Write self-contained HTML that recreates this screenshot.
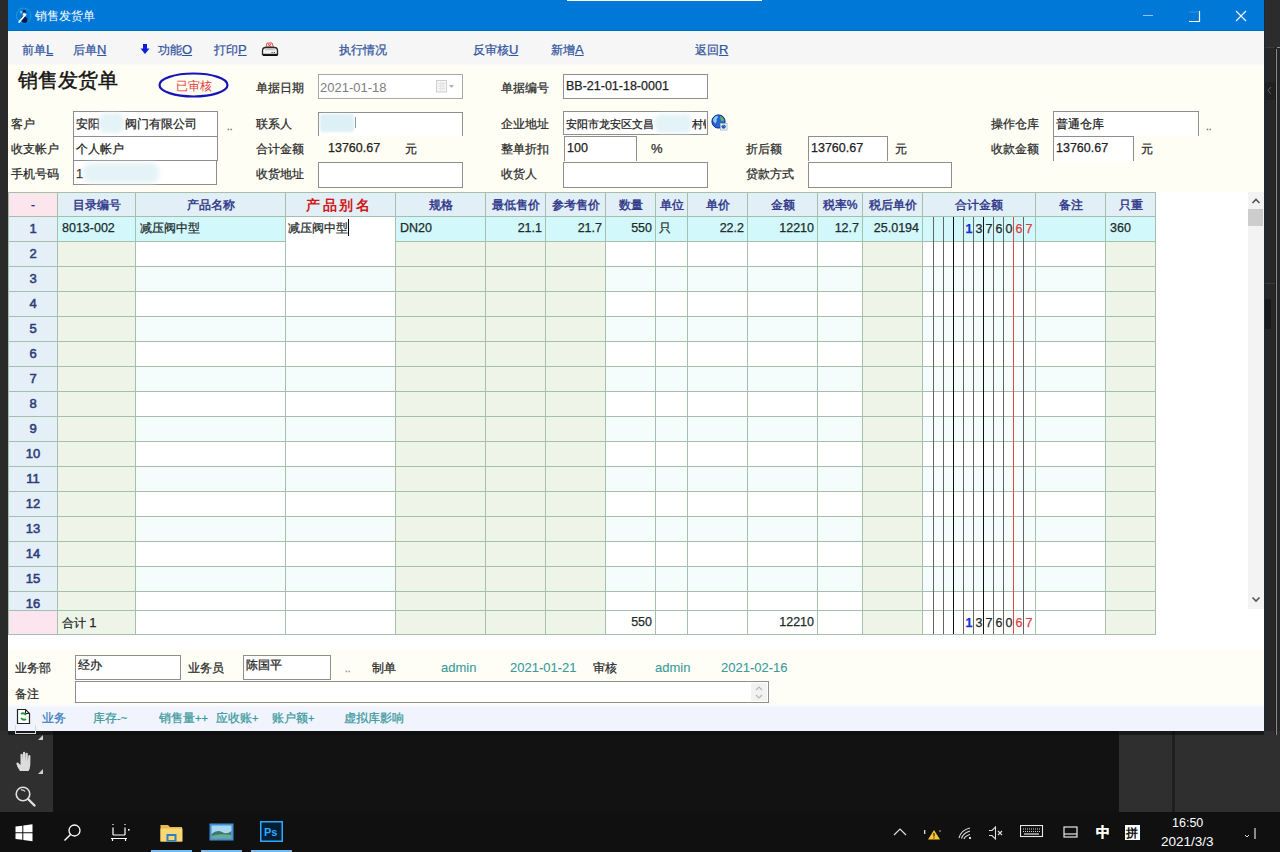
<!DOCTYPE html><html><head><meta charset="utf-8"><style>
html,body{margin:0;padding:0;width:1280px;height:852px;overflow:hidden;background:#121212;position:relative;font-family:"Liberation Sans",sans-serif;}
.t{position:absolute;white-space:nowrap;font-family:"Liberation Sans",sans-serif;-webkit-text-stroke-width:0.25px;}
.L{font-size:13px}
u{text-decoration:underline;text-underline-offset:1px}
</style></head><body>
<div style="position:absolute;left:0px;top:0px;width:8px;height:731px;background:#2a2a2a"></div>
<div style="position:absolute;left:0px;top:731px;width:53px;height:81px;background:#2f2f2f"></div>
<div style="position:absolute;left:1264px;top:0px;width:16px;height:812px;background:#272727"></div>
<div style="position:absolute;left:1119px;top:731px;width:161px;height:81px;background:#2f2f2f"></div>
<div style="position:absolute;left:1172px;top:731px;width:3px;height:81px;background:#1f1f1f"></div>
<div style="position:absolute;left:8px;top:731px;width:1256px;height:4px;background:#0c0c0c;opacity:.6"></div>
<div style="position:absolute;left:0px;top:812px;width:1280px;height:40px;background:#101010"></div>
<div style="position:absolute;left:8px;top:0px;width:1256px;height:31px;background:#0078d7"></div>
<div style="position:absolute;left:8px;top:30px;width:1256px;height:1px;background:#0868b8"></div>
<div style="position:absolute;left:8px;top:31px;width:1256px;height:1px;background:#e8fbff"></div>
<div style="position:absolute;left:567px;top:0px;width:195px;height:1px;background:#ffffff"></div>
<div style="position:absolute;left:8px;top:32px;width:1256px;height:32px;background:#f6f6f6"></div>
<div style="position:absolute;left:8px;top:64px;width:1256px;height:1px;background:#fbfbf6"></div>
<div style="position:absolute;left:8px;top:65px;width:1256px;height:127px;background:#fffef5"></div>
<div style="position:absolute;left:8px;top:192px;width:1256px;height:458px;background:#ffffff"></div>
<div style="position:absolute;left:8px;top:650px;width:1256px;height:55px;background:#fffef6"></div>
<div style="position:absolute;left:8px;top:705px;width:1256px;height:26px;background:#f1f4fc"></div>
<div style="position:absolute;left:8px;top:705px;width:1256px;height:2px;background:#f7f9fd"></div>
<div style="position:absolute;left:1264px;top:0px;width:1px;height:731px;background:#1b2a3a"></div>
<svg style="position:absolute;left:15px;top:7px" width="18" height="18" viewBox="0 0 18 18"><circle cx="8.7" cy="8.5" r="7.3" fill="none" stroke="#30a8d8" stroke-width="1.2" opacity=".55"/><path d="M6 10 Q9 8 12 11 Q13.5 14.5 10.5 16 Q7.5 16.5 6.5 14 Z" fill="#0a1a50"/><circle cx="9.3" cy="4.6" r="1.6" fill="#0a1a50"/><path d="M9 5 Q11 7 9.5 9 L7.5 8 Z" fill="#e8eef8"/><path d="M4.5 5 Q6 3 7.5 4.5 L6.5 7 Z" fill="#7fc0ea"/><path d="M4.2 15 L10.5 7.5" stroke="#ffffff" stroke-width="1.8" stroke-linecap="round"/></svg>
<div class="t" style="left:35px;top:10px;font-size:12px;line-height:12px;color:#ffffff;-webkit-text-stroke-width:0">销售发货单</div>
<div style="position:absolute;left:1143px;top:15px;width:10px;height:1px;background:#8fc3f0"></div>
<svg style="position:absolute;left:1186px;top:9px" width="16" height="14"><path d="M13.5 2 V12.5 H3" stroke="#ffffff" stroke-width="1.2" fill="none"/><path d="M3 3 H12" stroke="#3d93df" stroke-width="1" fill="none"/></svg>
<svg style="position:absolute;left:1234px;top:9px" width="14" height="14"><path d="M2 2 L12 12 M12 2 L2 12" stroke="#ffffff" stroke-width="1.1" fill="none"/></svg>
<div class="t" style="left:22px;top:44px;font-size:12px;line-height:12px;color:#34569e;">前单<u class="L">L</u></div>
<div class="t" style="left:73px;top:44px;font-size:12px;line-height:12px;color:#34569e;">后单<u class="L">N</u></div>
<svg style="position:absolute;left:139px;top:43px" width="12" height="12"><path d="M4 1 H8 V5.5 H10.5 L6 11 L1.5 5.5 H4 Z" fill="#0a1ee0"/></svg>
<div class="t" style="left:158px;top:44px;font-size:12px;line-height:12px;color:#34569e;">功能<u class="L">O</u></div>
<div class="t" style="left:214px;top:44px;font-size:12px;line-height:12px;color:#34569e;">打印<u class="L">P</u></div>
<svg style="position:absolute;left:261px;top:42px" width="18" height="15" viewBox="0 0 18 15"><path d="M6 1 L11 1 L12.5 5 L5 5 Z" fill="#ffe8e8" stroke="#d04040" stroke-width=".9"/><path d="M7 2 L10 4.5 M10 2 L7 4.5" stroke="#e03030" stroke-width=".8"/><path d="M1.5 9 Q1.5 5.5 4.5 5.5 L13.5 5.5 Q16.5 5.5 16.5 9 L16.5 12.5 L1.5 12.5 Z" fill="#f4f4f4" stroke="#2a2a2a" stroke-width="1.3"/><path d="M2 13.2 H16.5" stroke="#101010" stroke-width="1.6"/><path d="M4 8 Q9 7 14 8" stroke="#bdbdbd" stroke-width="1" fill="none"/><path d="M10.5 10.5 h1.2 M12.8 10.5 h1.2" stroke="#404040" stroke-width="1.1"/></svg>
<div class="t" style="left:339px;top:44px;font-size:12px;line-height:12px;color:#34569e;">执行情况</div>
<div class="t" style="left:473px;top:44px;font-size:12px;line-height:12px;color:#34569e;">反审核<u class="L">U</u></div>
<div class="t" style="left:551px;top:44px;font-size:12px;line-height:12px;color:#34569e;">新增<u class="L">A</u></div>
<div class="t" style="left:695px;top:44px;font-size:12px;line-height:12px;color:#34569e;">返回<u class="L">R</u></div>
<div class="t" style="left:18px;top:70px;font-size:20px;line-height:20px;color:#141414;font-weight:500;-webkit-text-stroke-width:0.45px;font-family:"Liberation Serif",serif;letter-spacing:1.2px;transform:scaleY(0.85);transform-origin:0 0">销售发货单</div>
<svg style="position:absolute;left:158px;top:72px" width="72" height="27"><ellipse cx="35.5" cy="13" rx="34" ry="11.5" fill="none" stroke="#1515b8" stroke-width="2.2"/></svg>
<div class="t" style="left:176px;top:80px;font-size:12px;line-height:12px;color:#e03a3a;-webkit-text-stroke-width:0">已审核</div>
<div class="t" style="left:256px;top:82px;font-size:12px;line-height:12px;color:#2a2a2a;">单据日期</div>
<div style="position:absolute;left:318px;top:74px;width:143px;height:23px;background:#ffffff;border:1px solid #a8a8a8;border-bottom:none;border-bottom:1px solid #a8a8a8;"></div>
<div class="t" style="left:320px;top:81px;font-size:13px;line-height:13px;color:#7e7e7e;-webkit-text-stroke-width:0">2021-01-18</div>
<svg style="position:absolute;left:435px;top:79px" width="22" height="14"><rect x="1.5" y="1.5" width="10" height="11.5" fill="#f6f6f6" stroke="#cfcfcf"/><path d="M3 4.5h7M3 7h7M3 9.5h7M5.5 3v9M8 3v9" stroke="#e0e0e0" stroke-width=".8"/><path d="M14 6 L19 6 L16.5 9 Z" fill="#b0b0b0"/></svg>
<div class="t" style="left:501px;top:82px;font-size:12px;line-height:12px;color:#2a2a2a;">单据编号</div>
<div style="position:absolute;left:563px;top:74px;width:143px;height:23px;background:#ffffff;border:1px solid #8e8e8e;border-bottom:none;border-bottom:1px solid #8e8e8e;"></div>
<div class="t" style="left:566px;top:80px;font-size:12.5px;line-height:12.5px;color:#222222;">BB-21-01-18-0001</div>
<div class="t" style="left:11px;top:118px;font-size:12px;line-height:12px;color:#2a2a2a;">客户</div>
<div style="position:absolute;left:73px;top:111px;width:143px;height:24px;background:#ffffff;border:1px solid #8e8e8e;border-bottom:none;"></div>
<div class="t" style="left:76px;top:118px;font-size:12px;line-height:12px;color:#222;">安阳</div>
<div style="position:absolute;left:99px;top:113px;width:25px;height:20px;background:#e4f3f7;border-radius:6px;filter:blur(2px)"></div>
<div class="t" style="left:125px;top:118px;font-size:12px;line-height:12px;color:#222;">阀门有限公司</div>
<div class="t" style="left:227px;top:122px;font-size:10px;line-height:10px;color:#666;">..</div>
<div class="t" style="left:256px;top:118px;font-size:12px;line-height:12px;color:#2a2a2a;">联系人</div>
<div style="position:absolute;left:318px;top:112px;width:143px;height:23px;background:#ffffff;border:1px solid #8e8e8e;border-bottom:none;"></div>
<div style="position:absolute;left:320px;top:114px;width:34px;height:18px;background:#ddf0f6;border-radius:3px;filter:blur(1.2px)"></div>
<div style="position:absolute;left:355px;top:117px;width:1px;height:11px;background:#8a9aa0"></div>
<div class="t" style="left:501px;top:118px;font-size:12px;line-height:12px;color:#2a2a2a;">企业地址</div>
<div style="position:absolute;left:563px;top:111px;width:143px;height:22px;background:#ffffff;border:1px solid #8e8e8e;border-bottom:none;border-bottom:1px solid #8e8e8e;"></div>
<div class="t" style="left:566px;top:119px;font-size:11px;line-height:11px;color:#222;">安阳市龙安区文昌</div>
<div style="position:absolute;left:655px;top:114px;width:37px;height:19px;background:#e4f3f7;border-radius:6px;filter:blur(2px)"></div>
<div class="t" style="left:692px;top:119px;font-size:11px;line-height:11px;color:#222;width:14px;overflow:hidden">村镇</div>
<svg style="position:absolute;left:711px;top:114px" width="17" height="17" viewBox="0 0 17 17"><circle cx="7.5" cy="7.5" r="6.6" fill="#2a62d0" stroke="#0c2c8a" stroke-width="1"/><path d="M2 6 Q3 2.5 6.5 1.8 Q7.5 3.5 5.5 5 Q6.5 7.5 4.5 9.5 Q2.5 8.5 2 6 Z" fill="#8fd0f0"/><path d="M9 2 Q12.5 3 13.5 6.5 L10.5 7.5 Q9 5 9 2 Z" fill="#5ab85a"/><rect x="9.5" y="9.5" width="6.5" height="6.5" fill="#ffffff" stroke="#a0b0c0" stroke-width=".8"/><circle cx="12.6" cy="12.6" r="2.2" fill="#1a58c0"/><path d="M11.3 12 Q12.6 11 13.8 12.5" stroke="#6ac060" stroke-width=".9" fill="none"/></svg>
<div class="t" style="left:991px;top:118px;font-size:12px;line-height:12px;color:#2a2a2a;">操作仓库</div>
<div style="position:absolute;left:1053px;top:111px;width:144px;height:24px;background:#ffffff;border:1px solid #8e8e8e;border-bottom:none;"></div>
<div class="t" style="left:1056px;top:118px;font-size:12px;line-height:12px;color:#222;">普通仓库</div>
<div class="t" style="left:1206px;top:122px;font-size:10px;line-height:10px;color:#666;">..</div>
<div class="t" style="left:11px;top:143px;font-size:12px;line-height:12px;color:#2a2a2a;">收支帐户</div>
<div style="position:absolute;left:73px;top:136px;width:143px;height:24px;background:#ffffff;border:1px solid #8e8e8e;border-bottom:none;"></div>
<div class="t" style="left:76px;top:143px;font-size:12px;line-height:12px;color:#222;">个人帐户</div>
<div class="t" style="left:256px;top:143px;font-size:12px;line-height:12px;color:#2a2a2a;">合计金额</div>
<div class="t" style="left:328px;top:142px;font-size:12.5px;line-height:12.5px;color:#222;">13760.67</div>
<div class="t" style="left:405px;top:143px;font-size:12px;line-height:12px;color:#2a2a2a;">元</div>
<div class="t" style="left:501px;top:143px;font-size:12px;line-height:12px;color:#2a2a2a;">整单折扣</div>
<div style="position:absolute;left:564px;top:136px;width:71px;height:24px;background:#ffffff;border:1px solid #8e8e8e;border-bottom:none;"></div>
<div class="t" style="left:567px;top:142px;font-size:12.5px;line-height:12.5px;color:#222;">100</div>
<div class="t" style="left:651px;top:142px;font-size:13px;line-height:13px;color:#2a2a2a;">%</div>
<div class="t" style="left:746px;top:143px;font-size:12px;line-height:12px;color:#2a2a2a;">折后额</div>
<div style="position:absolute;left:808px;top:136px;width:78px;height:24px;background:#ffffff;border:1px solid #8e8e8e;border-bottom:none;"></div>
<div class="t" style="left:811px;top:142px;font-size:12.5px;line-height:12.5px;color:#222;">13760.67</div>
<div class="t" style="left:895px;top:143px;font-size:12px;line-height:12px;color:#2a2a2a;">元</div>
<div class="t" style="left:991px;top:143px;font-size:12px;line-height:12px;color:#2a2a2a;">收款金额</div>
<div style="position:absolute;left:1053px;top:136px;width:79px;height:24px;background:#ffffff;border:1px solid #8e8e8e;border-bottom:none;"></div>
<div class="t" style="left:1056px;top:142px;font-size:12.5px;line-height:12.5px;color:#222;">13760.67</div>
<div class="t" style="left:1141px;top:143px;font-size:12px;line-height:12px;color:#2a2a2a;">元</div>
<div class="t" style="left:11px;top:168px;font-size:12px;line-height:12px;color:#2a2a2a;">手机号码</div>
<div style="position:absolute;left:73px;top:160px;width:142px;height:23px;background:#ffffff;border:1px solid #8e8e8e;border-bottom:none;border-bottom:1px solid #8e8e8e;"></div>
<div class="t" style="left:76px;top:167px;font-size:13px;line-height:13px;color:#333;">1</div>
<div style="position:absolute;left:83px;top:163px;width:76px;height:20px;background:#e4f3f7;border-radius:8px;filter:blur(2.5px)"></div>
<div class="t" style="left:256px;top:168px;font-size:12px;line-height:12px;color:#2a2a2a;">收货地址</div>
<div style="position:absolute;left:318px;top:162px;width:143px;height:24px;background:#ffffff;border:1px solid #8e8e8e;border-bottom:none;border-bottom:1px solid #8e8e8e;"></div>
<div class="t" style="left:501px;top:168px;font-size:12px;line-height:12px;color:#2a2a2a;">收货人</div>
<div style="position:absolute;left:563px;top:162px;width:143px;height:24px;background:#ffffff;border:1px solid #8e8e8e;border-bottom:none;border-bottom:1px solid #8e8e8e;"></div>
<div class="t" style="left:746px;top:168px;font-size:12px;line-height:12px;color:#2a2a2a;">贷款方式</div>
<div style="position:absolute;left:808px;top:162px;width:142px;height:24px;background:#ffffff;border:1px solid #8e8e8e;border-bottom:none;border-bottom:1px solid #8e8e8e;"></div>
<div style="position:absolute;left:8px;top:192px;width:49px;height:24px;background:#fde5ee"></div>
<div style="position:absolute;left:57px;top:192px;width:78px;height:24px;background:#e3eff6"></div>
<div style="position:absolute;left:135px;top:192px;width:150px;height:24px;background:#e3eff6"></div>
<div style="position:absolute;left:285px;top:192px;width:110px;height:24px;background:#e3eff6"></div>
<div style="position:absolute;left:395px;top:192px;width:90px;height:24px;background:#e3eff6"></div>
<div style="position:absolute;left:485px;top:192px;width:60px;height:24px;background:#e3eff6"></div>
<div style="position:absolute;left:545px;top:192px;width:60px;height:24px;background:#e3eff6"></div>
<div style="position:absolute;left:605px;top:192px;width:50px;height:24px;background:#e3eff6"></div>
<div style="position:absolute;left:655px;top:192px;width:32px;height:24px;background:#e3eff6"></div>
<div style="position:absolute;left:687px;top:192px;width:60px;height:24px;background:#e3eff6"></div>
<div style="position:absolute;left:747px;top:192px;width:70px;height:24px;background:#e3eff6"></div>
<div style="position:absolute;left:817px;top:192px;width:45px;height:24px;background:#e3eff6"></div>
<div style="position:absolute;left:862px;top:192px;width:60px;height:24px;background:#e3eff6"></div>
<div style="position:absolute;left:922px;top:192px;width:113px;height:24px;background:#e3eff6"></div>
<div style="position:absolute;left:1035px;top:192px;width:70px;height:24px;background:#e3eff6"></div>
<div style="position:absolute;left:1105px;top:192px;width:50px;height:24px;background:#e3eff6"></div>
<div style="position:absolute;left:8px;top:216px;width:49px;height:394px;background:#e4eff8"></div>
<div style="position:absolute;left:8px;top:610px;width:49px;height:24px;background:#fce5ee"></div>
<div style="position:absolute;left:57px;top:216px;width:78px;height:418px;background:#eef4e8"></div>
<div style="position:absolute;left:135px;top:216px;width:150px;height:25px;background:#f5fcfc"></div>
<div style="position:absolute;left:135px;top:241px;width:150px;height:25px;background:#ffffff"></div>
<div style="position:absolute;left:135px;top:266px;width:150px;height:25px;background:#f5fcfc"></div>
<div style="position:absolute;left:135px;top:291px;width:150px;height:25px;background:#ffffff"></div>
<div style="position:absolute;left:135px;top:316px;width:150px;height:25px;background:#f5fcfc"></div>
<div style="position:absolute;left:135px;top:341px;width:150px;height:25px;background:#ffffff"></div>
<div style="position:absolute;left:135px;top:366px;width:150px;height:25px;background:#f5fcfc"></div>
<div style="position:absolute;left:135px;top:391px;width:150px;height:25px;background:#ffffff"></div>
<div style="position:absolute;left:135px;top:416px;width:150px;height:25px;background:#f5fcfc"></div>
<div style="position:absolute;left:135px;top:441px;width:150px;height:25px;background:#ffffff"></div>
<div style="position:absolute;left:135px;top:466px;width:150px;height:25px;background:#f5fcfc"></div>
<div style="position:absolute;left:135px;top:491px;width:150px;height:25px;background:#ffffff"></div>
<div style="position:absolute;left:135px;top:516px;width:150px;height:25px;background:#f5fcfc"></div>
<div style="position:absolute;left:135px;top:541px;width:150px;height:25px;background:#ffffff"></div>
<div style="position:absolute;left:135px;top:566px;width:150px;height:25px;background:#f5fcfc"></div>
<div style="position:absolute;left:135px;top:591px;width:150px;height:19px;background:#ffffff"></div>
<div style="position:absolute;left:135px;top:610px;width:150px;height:24px;background:#ffffff"></div>
<div style="position:absolute;left:285px;top:216px;width:110px;height:25px;background:#f5fcfc"></div>
<div style="position:absolute;left:285px;top:241px;width:110px;height:25px;background:#ffffff"></div>
<div style="position:absolute;left:285px;top:266px;width:110px;height:25px;background:#f5fcfc"></div>
<div style="position:absolute;left:285px;top:291px;width:110px;height:25px;background:#ffffff"></div>
<div style="position:absolute;left:285px;top:316px;width:110px;height:25px;background:#f5fcfc"></div>
<div style="position:absolute;left:285px;top:341px;width:110px;height:25px;background:#ffffff"></div>
<div style="position:absolute;left:285px;top:366px;width:110px;height:25px;background:#f5fcfc"></div>
<div style="position:absolute;left:285px;top:391px;width:110px;height:25px;background:#ffffff"></div>
<div style="position:absolute;left:285px;top:416px;width:110px;height:25px;background:#f5fcfc"></div>
<div style="position:absolute;left:285px;top:441px;width:110px;height:25px;background:#ffffff"></div>
<div style="position:absolute;left:285px;top:466px;width:110px;height:25px;background:#f5fcfc"></div>
<div style="position:absolute;left:285px;top:491px;width:110px;height:25px;background:#ffffff"></div>
<div style="position:absolute;left:285px;top:516px;width:110px;height:25px;background:#f5fcfc"></div>
<div style="position:absolute;left:285px;top:541px;width:110px;height:25px;background:#ffffff"></div>
<div style="position:absolute;left:285px;top:566px;width:110px;height:25px;background:#f5fcfc"></div>
<div style="position:absolute;left:285px;top:591px;width:110px;height:19px;background:#ffffff"></div>
<div style="position:absolute;left:285px;top:610px;width:110px;height:24px;background:#ffffff"></div>
<div style="position:absolute;left:395px;top:216px;width:90px;height:418px;background:#eef4e8"></div>
<div style="position:absolute;left:485px;top:216px;width:60px;height:418px;background:#eef4e8"></div>
<div style="position:absolute;left:545px;top:216px;width:60px;height:418px;background:#eef4e8"></div>
<div style="position:absolute;left:605px;top:216px;width:50px;height:25px;background:#f5fcfc"></div>
<div style="position:absolute;left:605px;top:241px;width:50px;height:25px;background:#ffffff"></div>
<div style="position:absolute;left:605px;top:266px;width:50px;height:25px;background:#f5fcfc"></div>
<div style="position:absolute;left:605px;top:291px;width:50px;height:25px;background:#ffffff"></div>
<div style="position:absolute;left:605px;top:316px;width:50px;height:25px;background:#f5fcfc"></div>
<div style="position:absolute;left:605px;top:341px;width:50px;height:25px;background:#ffffff"></div>
<div style="position:absolute;left:605px;top:366px;width:50px;height:25px;background:#f5fcfc"></div>
<div style="position:absolute;left:605px;top:391px;width:50px;height:25px;background:#ffffff"></div>
<div style="position:absolute;left:605px;top:416px;width:50px;height:25px;background:#f5fcfc"></div>
<div style="position:absolute;left:605px;top:441px;width:50px;height:25px;background:#ffffff"></div>
<div style="position:absolute;left:605px;top:466px;width:50px;height:25px;background:#f5fcfc"></div>
<div style="position:absolute;left:605px;top:491px;width:50px;height:25px;background:#ffffff"></div>
<div style="position:absolute;left:605px;top:516px;width:50px;height:25px;background:#f5fcfc"></div>
<div style="position:absolute;left:605px;top:541px;width:50px;height:25px;background:#ffffff"></div>
<div style="position:absolute;left:605px;top:566px;width:50px;height:25px;background:#f5fcfc"></div>
<div style="position:absolute;left:605px;top:591px;width:50px;height:19px;background:#ffffff"></div>
<div style="position:absolute;left:605px;top:610px;width:50px;height:24px;background:#ffffff"></div>
<div style="position:absolute;left:655px;top:216px;width:32px;height:25px;background:#f5fcfc"></div>
<div style="position:absolute;left:655px;top:241px;width:32px;height:25px;background:#ffffff"></div>
<div style="position:absolute;left:655px;top:266px;width:32px;height:25px;background:#f5fcfc"></div>
<div style="position:absolute;left:655px;top:291px;width:32px;height:25px;background:#ffffff"></div>
<div style="position:absolute;left:655px;top:316px;width:32px;height:25px;background:#f5fcfc"></div>
<div style="position:absolute;left:655px;top:341px;width:32px;height:25px;background:#ffffff"></div>
<div style="position:absolute;left:655px;top:366px;width:32px;height:25px;background:#f5fcfc"></div>
<div style="position:absolute;left:655px;top:391px;width:32px;height:25px;background:#ffffff"></div>
<div style="position:absolute;left:655px;top:416px;width:32px;height:25px;background:#f5fcfc"></div>
<div style="position:absolute;left:655px;top:441px;width:32px;height:25px;background:#ffffff"></div>
<div style="position:absolute;left:655px;top:466px;width:32px;height:25px;background:#f5fcfc"></div>
<div style="position:absolute;left:655px;top:491px;width:32px;height:25px;background:#ffffff"></div>
<div style="position:absolute;left:655px;top:516px;width:32px;height:25px;background:#f5fcfc"></div>
<div style="position:absolute;left:655px;top:541px;width:32px;height:25px;background:#ffffff"></div>
<div style="position:absolute;left:655px;top:566px;width:32px;height:25px;background:#f5fcfc"></div>
<div style="position:absolute;left:655px;top:591px;width:32px;height:19px;background:#ffffff"></div>
<div style="position:absolute;left:655px;top:610px;width:32px;height:24px;background:#ffffff"></div>
<div style="position:absolute;left:687px;top:216px;width:60px;height:25px;background:#f5fcfc"></div>
<div style="position:absolute;left:687px;top:241px;width:60px;height:25px;background:#ffffff"></div>
<div style="position:absolute;left:687px;top:266px;width:60px;height:25px;background:#f5fcfc"></div>
<div style="position:absolute;left:687px;top:291px;width:60px;height:25px;background:#ffffff"></div>
<div style="position:absolute;left:687px;top:316px;width:60px;height:25px;background:#f5fcfc"></div>
<div style="position:absolute;left:687px;top:341px;width:60px;height:25px;background:#ffffff"></div>
<div style="position:absolute;left:687px;top:366px;width:60px;height:25px;background:#f5fcfc"></div>
<div style="position:absolute;left:687px;top:391px;width:60px;height:25px;background:#ffffff"></div>
<div style="position:absolute;left:687px;top:416px;width:60px;height:25px;background:#f5fcfc"></div>
<div style="position:absolute;left:687px;top:441px;width:60px;height:25px;background:#ffffff"></div>
<div style="position:absolute;left:687px;top:466px;width:60px;height:25px;background:#f5fcfc"></div>
<div style="position:absolute;left:687px;top:491px;width:60px;height:25px;background:#ffffff"></div>
<div style="position:absolute;left:687px;top:516px;width:60px;height:25px;background:#f5fcfc"></div>
<div style="position:absolute;left:687px;top:541px;width:60px;height:25px;background:#ffffff"></div>
<div style="position:absolute;left:687px;top:566px;width:60px;height:25px;background:#f5fcfc"></div>
<div style="position:absolute;left:687px;top:591px;width:60px;height:19px;background:#ffffff"></div>
<div style="position:absolute;left:687px;top:610px;width:60px;height:24px;background:#ffffff"></div>
<div style="position:absolute;left:747px;top:216px;width:70px;height:25px;background:#f5fcfc"></div>
<div style="position:absolute;left:747px;top:241px;width:70px;height:25px;background:#ffffff"></div>
<div style="position:absolute;left:747px;top:266px;width:70px;height:25px;background:#f5fcfc"></div>
<div style="position:absolute;left:747px;top:291px;width:70px;height:25px;background:#ffffff"></div>
<div style="position:absolute;left:747px;top:316px;width:70px;height:25px;background:#f5fcfc"></div>
<div style="position:absolute;left:747px;top:341px;width:70px;height:25px;background:#ffffff"></div>
<div style="position:absolute;left:747px;top:366px;width:70px;height:25px;background:#f5fcfc"></div>
<div style="position:absolute;left:747px;top:391px;width:70px;height:25px;background:#ffffff"></div>
<div style="position:absolute;left:747px;top:416px;width:70px;height:25px;background:#f5fcfc"></div>
<div style="position:absolute;left:747px;top:441px;width:70px;height:25px;background:#ffffff"></div>
<div style="position:absolute;left:747px;top:466px;width:70px;height:25px;background:#f5fcfc"></div>
<div style="position:absolute;left:747px;top:491px;width:70px;height:25px;background:#ffffff"></div>
<div style="position:absolute;left:747px;top:516px;width:70px;height:25px;background:#f5fcfc"></div>
<div style="position:absolute;left:747px;top:541px;width:70px;height:25px;background:#ffffff"></div>
<div style="position:absolute;left:747px;top:566px;width:70px;height:25px;background:#f5fcfc"></div>
<div style="position:absolute;left:747px;top:591px;width:70px;height:19px;background:#ffffff"></div>
<div style="position:absolute;left:747px;top:610px;width:70px;height:24px;background:#ffffff"></div>
<div style="position:absolute;left:817px;top:216px;width:45px;height:25px;background:#f5fcfc"></div>
<div style="position:absolute;left:817px;top:241px;width:45px;height:25px;background:#ffffff"></div>
<div style="position:absolute;left:817px;top:266px;width:45px;height:25px;background:#f5fcfc"></div>
<div style="position:absolute;left:817px;top:291px;width:45px;height:25px;background:#ffffff"></div>
<div style="position:absolute;left:817px;top:316px;width:45px;height:25px;background:#f5fcfc"></div>
<div style="position:absolute;left:817px;top:341px;width:45px;height:25px;background:#ffffff"></div>
<div style="position:absolute;left:817px;top:366px;width:45px;height:25px;background:#f5fcfc"></div>
<div style="position:absolute;left:817px;top:391px;width:45px;height:25px;background:#ffffff"></div>
<div style="position:absolute;left:817px;top:416px;width:45px;height:25px;background:#f5fcfc"></div>
<div style="position:absolute;left:817px;top:441px;width:45px;height:25px;background:#ffffff"></div>
<div style="position:absolute;left:817px;top:466px;width:45px;height:25px;background:#f5fcfc"></div>
<div style="position:absolute;left:817px;top:491px;width:45px;height:25px;background:#ffffff"></div>
<div style="position:absolute;left:817px;top:516px;width:45px;height:25px;background:#f5fcfc"></div>
<div style="position:absolute;left:817px;top:541px;width:45px;height:25px;background:#ffffff"></div>
<div style="position:absolute;left:817px;top:566px;width:45px;height:25px;background:#f5fcfc"></div>
<div style="position:absolute;left:817px;top:591px;width:45px;height:19px;background:#ffffff"></div>
<div style="position:absolute;left:817px;top:610px;width:45px;height:24px;background:#ffffff"></div>
<div style="position:absolute;left:862px;top:216px;width:60px;height:418px;background:#eef4e8"></div>
<div style="position:absolute;left:922px;top:216px;width:113px;height:25px;background:#f5fcfc"></div>
<div style="position:absolute;left:922px;top:241px;width:113px;height:25px;background:#ffffff"></div>
<div style="position:absolute;left:922px;top:266px;width:113px;height:25px;background:#f5fcfc"></div>
<div style="position:absolute;left:922px;top:291px;width:113px;height:25px;background:#ffffff"></div>
<div style="position:absolute;left:922px;top:316px;width:113px;height:25px;background:#f5fcfc"></div>
<div style="position:absolute;left:922px;top:341px;width:113px;height:25px;background:#ffffff"></div>
<div style="position:absolute;left:922px;top:366px;width:113px;height:25px;background:#f5fcfc"></div>
<div style="position:absolute;left:922px;top:391px;width:113px;height:25px;background:#ffffff"></div>
<div style="position:absolute;left:922px;top:416px;width:113px;height:25px;background:#f5fcfc"></div>
<div style="position:absolute;left:922px;top:441px;width:113px;height:25px;background:#ffffff"></div>
<div style="position:absolute;left:922px;top:466px;width:113px;height:25px;background:#f5fcfc"></div>
<div style="position:absolute;left:922px;top:491px;width:113px;height:25px;background:#ffffff"></div>
<div style="position:absolute;left:922px;top:516px;width:113px;height:25px;background:#f5fcfc"></div>
<div style="position:absolute;left:922px;top:541px;width:113px;height:25px;background:#ffffff"></div>
<div style="position:absolute;left:922px;top:566px;width:113px;height:25px;background:#f5fcfc"></div>
<div style="position:absolute;left:922px;top:591px;width:113px;height:19px;background:#ffffff"></div>
<div style="position:absolute;left:922px;top:610px;width:113px;height:24px;background:#ffffff"></div>
<div style="position:absolute;left:1035px;top:216px;width:70px;height:25px;background:#f5fcfc"></div>
<div style="position:absolute;left:1035px;top:241px;width:70px;height:25px;background:#ffffff"></div>
<div style="position:absolute;left:1035px;top:266px;width:70px;height:25px;background:#f5fcfc"></div>
<div style="position:absolute;left:1035px;top:291px;width:70px;height:25px;background:#ffffff"></div>
<div style="position:absolute;left:1035px;top:316px;width:70px;height:25px;background:#f5fcfc"></div>
<div style="position:absolute;left:1035px;top:341px;width:70px;height:25px;background:#ffffff"></div>
<div style="position:absolute;left:1035px;top:366px;width:70px;height:25px;background:#f5fcfc"></div>
<div style="position:absolute;left:1035px;top:391px;width:70px;height:25px;background:#ffffff"></div>
<div style="position:absolute;left:1035px;top:416px;width:70px;height:25px;background:#f5fcfc"></div>
<div style="position:absolute;left:1035px;top:441px;width:70px;height:25px;background:#ffffff"></div>
<div style="position:absolute;left:1035px;top:466px;width:70px;height:25px;background:#f5fcfc"></div>
<div style="position:absolute;left:1035px;top:491px;width:70px;height:25px;background:#ffffff"></div>
<div style="position:absolute;left:1035px;top:516px;width:70px;height:25px;background:#f5fcfc"></div>
<div style="position:absolute;left:1035px;top:541px;width:70px;height:25px;background:#ffffff"></div>
<div style="position:absolute;left:1035px;top:566px;width:70px;height:25px;background:#f5fcfc"></div>
<div style="position:absolute;left:1035px;top:591px;width:70px;height:19px;background:#ffffff"></div>
<div style="position:absolute;left:1035px;top:610px;width:70px;height:24px;background:#ffffff"></div>
<div style="position:absolute;left:1105px;top:216px;width:50px;height:418px;background:#eef4e8"></div>
<div style="position:absolute;left:57px;top:216px;width:1098px;height:25px;background:#d2f8fb"></div>
<div style="position:absolute;left:8px;top:192px;width:1148px;height:1px;background:#a6bfac"></div>
<div style="position:absolute;left:8px;top:216px;width:1148px;height:1px;background:#a6bfac"></div>
<div style="position:absolute;left:8px;top:241px;width:1148px;height:1px;background:#a6bfac"></div>
<div style="position:absolute;left:8px;top:266px;width:1148px;height:1px;background:#a6bfac"></div>
<div style="position:absolute;left:8px;top:291px;width:1148px;height:1px;background:#a6bfac"></div>
<div style="position:absolute;left:8px;top:316px;width:1148px;height:1px;background:#a6bfac"></div>
<div style="position:absolute;left:8px;top:341px;width:1148px;height:1px;background:#a6bfac"></div>
<div style="position:absolute;left:8px;top:366px;width:1148px;height:1px;background:#a6bfac"></div>
<div style="position:absolute;left:8px;top:391px;width:1148px;height:1px;background:#a6bfac"></div>
<div style="position:absolute;left:8px;top:416px;width:1148px;height:1px;background:#a6bfac"></div>
<div style="position:absolute;left:8px;top:441px;width:1148px;height:1px;background:#a6bfac"></div>
<div style="position:absolute;left:8px;top:466px;width:1148px;height:1px;background:#a6bfac"></div>
<div style="position:absolute;left:8px;top:491px;width:1148px;height:1px;background:#a6bfac"></div>
<div style="position:absolute;left:8px;top:516px;width:1148px;height:1px;background:#a6bfac"></div>
<div style="position:absolute;left:8px;top:541px;width:1148px;height:1px;background:#a6bfac"></div>
<div style="position:absolute;left:8px;top:566px;width:1148px;height:1px;background:#a6bfac"></div>
<div style="position:absolute;left:8px;top:591px;width:1148px;height:1px;background:#a6bfac"></div>
<div style="position:absolute;left:8px;top:610px;width:1148px;height:1px;background:#a6bfac"></div>
<div style="position:absolute;left:8px;top:634px;width:1148px;height:1px;background:#a6bfac"></div>
<div style="position:absolute;left:8px;top:192px;width:1px;height:443px;background:#a6bfac"></div>
<div style="position:absolute;left:57px;top:192px;width:1px;height:443px;background:#a6bfac"></div>
<div style="position:absolute;left:135px;top:192px;width:1px;height:443px;background:#a6bfac"></div>
<div style="position:absolute;left:285px;top:192px;width:1px;height:443px;background:#a6bfac"></div>
<div style="position:absolute;left:395px;top:192px;width:1px;height:443px;background:#a6bfac"></div>
<div style="position:absolute;left:485px;top:192px;width:1px;height:443px;background:#a6bfac"></div>
<div style="position:absolute;left:545px;top:192px;width:1px;height:443px;background:#a6bfac"></div>
<div style="position:absolute;left:605px;top:192px;width:1px;height:443px;background:#a6bfac"></div>
<div style="position:absolute;left:655px;top:192px;width:1px;height:443px;background:#a6bfac"></div>
<div style="position:absolute;left:687px;top:192px;width:1px;height:443px;background:#a6bfac"></div>
<div style="position:absolute;left:747px;top:192px;width:1px;height:443px;background:#a6bfac"></div>
<div style="position:absolute;left:817px;top:192px;width:1px;height:443px;background:#a6bfac"></div>
<div style="position:absolute;left:862px;top:192px;width:1px;height:443px;background:#a6bfac"></div>
<div style="position:absolute;left:922px;top:192px;width:1px;height:443px;background:#a6bfac"></div>
<div style="position:absolute;left:1035px;top:192px;width:1px;height:443px;background:#a6bfac"></div>
<div style="position:absolute;left:1105px;top:192px;width:1px;height:443px;background:#a6bfac"></div>
<div style="position:absolute;left:1155px;top:192px;width:1px;height:443px;background:#a6bfac"></div>
<div style="position:absolute;left:933px;top:217px;width:1px;height:417px;background:#646464"></div>
<div style="position:absolute;left:943px;top:217px;width:1px;height:417px;background:#646464"></div>
<div style="position:absolute;left:953px;top:217px;width:1px;height:417px;background:#101010"></div>
<div style="position:absolute;left:963px;top:217px;width:1px;height:417px;background:#646464"></div>
<div style="position:absolute;left:973px;top:217px;width:1px;height:417px;background:#646464"></div>
<div style="position:absolute;left:983px;top:217px;width:1px;height:417px;background:#101010"></div>
<div style="position:absolute;left:993px;top:217px;width:1px;height:417px;background:#646464"></div>
<div style="position:absolute;left:1003px;top:217px;width:1px;height:417px;background:#646464"></div>
<div style="position:absolute;left:1013px;top:217px;width:1px;height:417px;background:#e04848"></div>
<div style="position:absolute;left:1023px;top:217px;width:1px;height:417px;background:#646464"></div>
<div style="position:absolute;left:286px;top:217px;width:109px;height:49px;background:#ffffff"></div>
<div class="t" style="left:9px;top:199px;width:48px;text-align:center;font-size:12px;line-height:12px;color:#2c3488;font-weight:500;-webkit-text-stroke-width:0.4px">-</div>
<div class="t" style="left:58px;top:199px;width:77px;text-align:center;font-size:12px;line-height:12px;color:#2c3488;font-weight:500;-webkit-text-stroke-width:0.4px">目录编号</div>
<div class="t" style="left:136px;top:199px;width:149px;text-align:center;font-size:12px;line-height:12px;color:#2c3488;font-weight:500;-webkit-text-stroke-width:0.4px">产品名称</div>
<div class="t" style="left:286px;top:197px;width:109px;text-align:center;font-size:14px;line-height:16px;color:#d01818;font-weight:bold;letter-spacing:2.5px;text-indent:-3px;-webkit-text-stroke-width:0">产品别名</div>
<div class="t" style="left:396px;top:199px;width:89px;text-align:center;font-size:12px;line-height:12px;color:#2c3488;font-weight:500;-webkit-text-stroke-width:0.4px">规格</div>
<div class="t" style="left:486px;top:199px;width:59px;text-align:center;font-size:12px;line-height:12px;color:#2c3488;font-weight:500;-webkit-text-stroke-width:0.4px">最低售价</div>
<div class="t" style="left:546px;top:199px;width:59px;text-align:center;font-size:12px;line-height:12px;color:#2c3488;font-weight:500;-webkit-text-stroke-width:0.4px">参考售价</div>
<div class="t" style="left:606px;top:199px;width:49px;text-align:center;font-size:12px;line-height:12px;color:#2c3488;font-weight:500;-webkit-text-stroke-width:0.4px">数量</div>
<div class="t" style="left:656px;top:199px;width:31px;text-align:center;font-size:12px;line-height:12px;color:#2c3488;font-weight:500;-webkit-text-stroke-width:0.4px">单位</div>
<div class="t" style="left:688px;top:199px;width:59px;text-align:center;font-size:12px;line-height:12px;color:#2c3488;font-weight:500;-webkit-text-stroke-width:0.4px">单价</div>
<div class="t" style="left:748px;top:199px;width:69px;text-align:center;font-size:12px;line-height:12px;color:#2c3488;font-weight:500;-webkit-text-stroke-width:0.4px">金额</div>
<div class="t" style="left:818px;top:199px;width:44px;text-align:center;font-size:12px;line-height:12px;color:#2c3488;font-weight:500;-webkit-text-stroke-width:0.4px">税率%</div>
<div class="t" style="left:863px;top:199px;width:59px;text-align:center;font-size:12px;line-height:12px;color:#2c3488;font-weight:500;-webkit-text-stroke-width:0.4px">税后单价</div>
<div class="t" style="left:923px;top:199px;width:112px;text-align:center;font-size:12px;line-height:12px;color:#2c3488;font-weight:500;-webkit-text-stroke-width:0.4px">合计金额</div>
<div class="t" style="left:1036px;top:199px;width:69px;text-align:center;font-size:12px;line-height:12px;color:#2c3488;font-weight:500;-webkit-text-stroke-width:0.4px">备注</div>
<div class="t" style="left:1106px;top:199px;width:49px;text-align:center;font-size:12px;line-height:12px;color:#2c3488;font-weight:500;-webkit-text-stroke-width:0.4px">只重</div>
<div class="t" style="left:9px;top:223px;width:48px;text-align:center;font-size:13px;line-height:12px;color:#2e3d78;font-weight:normal;-webkit-text-stroke-width:0.55px">1</div>
<div class="t" style="left:9px;top:248px;width:48px;text-align:center;font-size:13px;line-height:12px;color:#2e3d78;font-weight:normal;-webkit-text-stroke-width:0.55px">2</div>
<div class="t" style="left:9px;top:273px;width:48px;text-align:center;font-size:13px;line-height:12px;color:#2e3d78;font-weight:normal;-webkit-text-stroke-width:0.55px">3</div>
<div class="t" style="left:9px;top:298px;width:48px;text-align:center;font-size:13px;line-height:12px;color:#2e3d78;font-weight:normal;-webkit-text-stroke-width:0.55px">4</div>
<div class="t" style="left:9px;top:323px;width:48px;text-align:center;font-size:13px;line-height:12px;color:#2e3d78;font-weight:normal;-webkit-text-stroke-width:0.55px">5</div>
<div class="t" style="left:9px;top:348px;width:48px;text-align:center;font-size:13px;line-height:12px;color:#2e3d78;font-weight:normal;-webkit-text-stroke-width:0.55px">6</div>
<div class="t" style="left:9px;top:373px;width:48px;text-align:center;font-size:13px;line-height:12px;color:#2e3d78;font-weight:normal;-webkit-text-stroke-width:0.55px">7</div>
<div class="t" style="left:9px;top:398px;width:48px;text-align:center;font-size:13px;line-height:12px;color:#2e3d78;font-weight:normal;-webkit-text-stroke-width:0.55px">8</div>
<div class="t" style="left:9px;top:423px;width:48px;text-align:center;font-size:13px;line-height:12px;color:#2e3d78;font-weight:normal;-webkit-text-stroke-width:0.55px">9</div>
<div class="t" style="left:9px;top:448px;width:48px;text-align:center;font-size:13px;line-height:12px;color:#2e3d78;font-weight:normal;-webkit-text-stroke-width:0.55px">10</div>
<div class="t" style="left:9px;top:473px;width:48px;text-align:center;font-size:13px;line-height:12px;color:#2e3d78;font-weight:normal;-webkit-text-stroke-width:0.55px">11</div>
<div class="t" style="left:9px;top:498px;width:48px;text-align:center;font-size:13px;line-height:12px;color:#2e3d78;font-weight:normal;-webkit-text-stroke-width:0.55px">12</div>
<div class="t" style="left:9px;top:523px;width:48px;text-align:center;font-size:13px;line-height:12px;color:#2e3d78;font-weight:normal;-webkit-text-stroke-width:0.55px">13</div>
<div class="t" style="left:9px;top:548px;width:48px;text-align:center;font-size:13px;line-height:12px;color:#2e3d78;font-weight:normal;-webkit-text-stroke-width:0.55px">14</div>
<div class="t" style="left:9px;top:573px;width:48px;text-align:center;font-size:13px;line-height:12px;color:#2e3d78;font-weight:normal;-webkit-text-stroke-width:0.55px">15</div>
<div class="t" style="left:9px;top:598px;width:48px;text-align:center;font-size:13px;line-height:12px;color:#2e3d78;font-weight:normal;-webkit-text-stroke-width:0.55px">16</div>
<div class="t" style="left:62px;top:222px;font-size:12.5px;line-height:12.5px;color:#1e2a2a;">8013-002</div>
<div class="t" style="left:140px;top:222px;font-size:12px;line-height:12px;color:#1e2a2a;">减压阀中型</div>
<div class="t" style="left:288px;top:222px;font-size:12px;line-height:12px;color:#1e2a2a;">减压阀中型</div>
<div style="position:absolute;left:348px;top:219px;width:1px;height:17px;background:#000"></div>
<div class="t" style="left:400px;top:222px;font-size:12.5px;line-height:12.5px;color:#1e2a2a;">DN20</div>
<div class="t" style="left:442px;top:222px;width:100px;text-align:right;font-size:12.5px;line-height:12px;color:#1e2a2a">21.1</div>
<div class="t" style="left:502px;top:222px;width:100px;text-align:right;font-size:12.5px;line-height:12px;color:#1e2a2a">21.7</div>
<div class="t" style="left:552px;top:222px;width:100px;text-align:right;font-size:12.5px;line-height:12px;color:#1e2a2a">550</div>
<div class="t" style="left:659px;top:222px;font-size:12px;line-height:12px;color:#1e2a2a;">只</div>
<div class="t" style="left:644px;top:222px;width:100px;text-align:right;font-size:12.5px;line-height:12px;color:#1e2a2a">22.2</div>
<div class="t" style="left:714px;top:222px;width:100px;text-align:right;font-size:12.5px;line-height:12px;color:#1e2a2a">12210</div>
<div class="t" style="left:759px;top:222px;width:100px;text-align:right;font-size:12.5px;line-height:12px;color:#1e2a2a">12.7</div>
<div class="t" style="left:819px;top:222px;width:100px;text-align:right;font-size:12.5px;line-height:12px;color:#1e2a2a">25.0194</div>
<div class="t" style="left:1110px;top:222px;font-size:12.5px;line-height:12.5px;color:#1e2a2a;">360</div>
<div class="t" style="left:964px;top:223px;width:10px;text-align:center;font-size:12.5px;line-height:12px;color:#1a2fd0;font-weight:bold">1</div>
<div class="t" style="left:974px;top:223px;width:10px;text-align:center;font-size:12.5px;line-height:12px;color:#1e2a2a;font-weight:normal">3</div>
<div class="t" style="left:984px;top:223px;width:10px;text-align:center;font-size:12.5px;line-height:12px;color:#1e2a2a;font-weight:normal">7</div>
<div class="t" style="left:994px;top:223px;width:10px;text-align:center;font-size:12.5px;line-height:12px;color:#1e2a2a;font-weight:normal">6</div>
<div class="t" style="left:1004px;top:223px;width:10px;text-align:center;font-size:12.5px;line-height:12px;color:#1e2a2a;font-weight:normal">0</div>
<div class="t" style="left:1014px;top:223px;width:10px;text-align:center;font-size:12.5px;line-height:12px;color:#e03a3a;font-weight:normal">6</div>
<div class="t" style="left:1024px;top:223px;width:10px;text-align:center;font-size:12.5px;line-height:12px;color:#e03a3a;font-weight:normal">7</div>
<div class="t" style="left:62px;top:617px;font-size:12px;line-height:12px;color:#1e2a2a;">合计 <span class="L">1</span></div>
<div class="t" style="left:552px;top:616px;width:100px;text-align:right;font-size:12.5px;line-height:12px;color:#1e2a2a">550</div>
<div class="t" style="left:714px;top:616px;width:100px;text-align:right;font-size:12.5px;line-height:12px;color:#1e2a2a">12210</div>
<div class="t" style="left:964px;top:617px;width:10px;text-align:center;font-size:12.5px;line-height:12px;color:#1a2fd0;font-weight:bold">1</div>
<div class="t" style="left:974px;top:617px;width:10px;text-align:center;font-size:12.5px;line-height:12px;color:#1e2a2a;font-weight:normal">3</div>
<div class="t" style="left:984px;top:617px;width:10px;text-align:center;font-size:12.5px;line-height:12px;color:#1e2a2a;font-weight:normal">7</div>
<div class="t" style="left:994px;top:617px;width:10px;text-align:center;font-size:12.5px;line-height:12px;color:#1e2a2a;font-weight:normal">6</div>
<div class="t" style="left:1004px;top:617px;width:10px;text-align:center;font-size:12.5px;line-height:12px;color:#1e2a2a;font-weight:normal">0</div>
<div class="t" style="left:1014px;top:617px;width:10px;text-align:center;font-size:12.5px;line-height:12px;color:#e03a3a;font-weight:normal">6</div>
<div class="t" style="left:1024px;top:617px;width:10px;text-align:center;font-size:12.5px;line-height:12px;color:#e03a3a;font-weight:normal">7</div>
<div style="position:absolute;left:1248px;top:192px;width:16px;height:417px;background:#f3f3f3"></div>
<div style="position:absolute;left:1248px;top:209px;width:15px;height:17px;background:#cdcdcd"></div>
<svg style="position:absolute;left:1250px;top:196px" width="12" height="9"><path d="M2.5 7 L6 3.5 L9.5 7" stroke="#555555" stroke-width="1.6" fill="none"/></svg>
<svg style="position:absolute;left:1250px;top:595px" width="12" height="9"><path d="M2.5 2.5 L6 6 L9.5 2.5" stroke="#555555" stroke-width="1.6" fill="none"/></svg>
<div class="t" style="left:15px;top:662px;font-size:12px;line-height:12px;color:#2a2a2a;">业务部</div>
<div style="position:absolute;left:75px;top:655px;width:104px;height:23px;background:#ffffff;border:1px solid #8e8e8e;border-bottom:none;border-bottom:1px solid #8e8e8e;"></div>
<div class="t" style="left:78px;top:659px;font-size:12px;line-height:12px;color:#222;">经办</div>
<div class="t" style="left:188px;top:662px;font-size:12px;line-height:12px;color:#2a2a2a;">业务员</div>
<div style="position:absolute;left:243px;top:655px;width:86px;height:23px;background:#ffffff;border:1px solid #8e8e8e;border-bottom:none;border-bottom:1px solid #8e8e8e;"></div>
<div class="t" style="left:246px;top:659px;font-size:12px;line-height:12px;color:#222;">陈国平</div>
<div class="t" style="left:345px;top:664px;font-size:10px;line-height:10px;color:#888;">..</div>
<div class="t" style="left:372px;top:662px;font-size:12px;line-height:12px;color:#2a2a2a;">制单</div>
<div class="t" style="left:441px;top:661px;font-size:13px;line-height:13px;color:#3a9a9c;-webkit-text-stroke-width:0.1px">admin</div>
<div class="t" style="left:510px;top:661px;font-size:13px;line-height:13px;color:#3a9a9c;-webkit-text-stroke-width:0.1px">2021-01-21</div>
<div class="t" style="left:593px;top:662px;font-size:12px;line-height:12px;color:#2a2a2a;">审核</div>
<div class="t" style="left:655px;top:661px;font-size:13px;line-height:13px;color:#3a9a9c;-webkit-text-stroke-width:0.1px">admin</div>
<div class="t" style="left:721px;top:661px;font-size:13px;line-height:13px;color:#3a9a9c;-webkit-text-stroke-width:0.1px">2021-02-16</div>
<div class="t" style="left:15px;top:688px;font-size:12px;line-height:12px;color:#2a2a2a;">备注</div>
<div style="position:absolute;left:75px;top:681px;width:692px;height:20px;background:#ffffff;border:1px solid #8e8e8e;border-bottom:none;border-bottom:1px solid #8e8e8e;"></div>
<div style="position:absolute;left:751px;top:683px;width:16px;height:18px;background:#f2f2f2"></div>
<svg style="position:absolute;left:752px;top:684px" width="14" height="17"><path d="M4 6 L7 3 L10 6 M4 11 L7 14 L10 11" stroke="#b8b8b8" stroke-width="1.2" fill="none"/></svg>
<svg style="position:absolute;left:16px;top:708px" width="15" height="17" viewBox="0 0 15 17"><path d="M1.5 1.5 H9.5 L13.5 5.5 V15.5 H1.5 Z" fill="#fff" stroke="#222" stroke-width="1.2"/><path d="M9.5 1.5 V5.5 H13.5" fill="none" stroke="#222" stroke-width="1"/><path d="M5 6 Q7.5 4 10 7 M10 11 Q7.5 13 5 10" stroke="#1a9a30" stroke-width="1.8" fill="none"/></svg>
<div class="t" style="left:42px;top:712px;font-size:12px;line-height:12px;color:#3a7ac0;">业务</div>
<div class="t" style="left:93px;top:712px;font-size:12px;line-height:12px;color:#3b9a9e;">库存<span style="font-size:11px">-~</span></div>
<div class="t" style="left:159px;top:712px;font-size:12px;line-height:12px;color:#3b9a9e;">销售量<span style="font-size:11px">++</span></div>
<div class="t" style="left:216px;top:712px;font-size:12px;line-height:12px;color:#3b9a9e;">应收账<span style="font-size:11px">+</span></div>
<div class="t" style="left:272px;top:712px;font-size:12px;line-height:12px;color:#3b9a9e;">账户额<span style="font-size:11px">+</span></div>
<div class="t" style="left:344px;top:712px;font-size:12px;line-height:12px;color:#3b9a9e;">虚拟库影响</div>
<div style="position:absolute;left:15px;top:725px;width:19px;height:8px;border:1px solid #d8d8d8;border-top:none;"></div>
<svg style="position:absolute;left:38px;top:735px" width="5" height="5"><path d="M5 0 V5 H0 Z" fill="#cfcfcf"/></svg>
<svg style="position:absolute;left:14px;top:750px" width="22" height="24" viewBox="0 0 22 24"><path d="M6 21 Q3 17 2.5 14 Q2 12.5 3.5 12.5 Q5 13 6.5 15 L6.5 5 Q6.5 3.8 7.6 3.8 Q8.7 3.8 8.7 5 L8.7 11 L9 3 Q9 1.8 10.1 1.8 Q11.2 1.8 11.2 3 L11.3 11 L11.6 4 Q11.6 2.8 12.7 2.8 Q13.8 2.8 13.8 4 L13.8 11.5 L14.3 6 Q14.4 5 15.4 5 Q16.4 5 16.4 6.2 L16.3 15 Q16 19 14.5 21 Z" fill="#dcdcdc"/></svg>
<svg style="position:absolute;left:38px;top:769px" width="5" height="5"><path d="M5 0 V5 H0 Z" fill="#cfcfcf"/></svg>
<svg style="position:absolute;left:13px;top:784px" width="24" height="24" viewBox="0 0 24 24"><circle cx="10" cy="10" r="6.8" fill="none" stroke="#e0e0e0" stroke-width="1.6"/><path d="M8 6 Q10.5 5.5 12 7.5" stroke="#e0e0e0" stroke-width="1.2" fill="none"/><path d="M15 15 L21.5 21.5" stroke="#e0e0e0" stroke-width="2.4" stroke-linecap="round"/></svg>
<div style="position:absolute;left:1265px;top:0px;width:15px;height:47px;background:#2c2c2c"></div>
<div style="position:absolute;left:1276px;top:49px;width:1px;height:686px;background:#8c8c8c"></div>
<div style="position:absolute;left:1275px;top:47px;width:1px;height:688px;background:#1d1d1d"></div>
<div style="position:absolute;left:1277px;top:47px;width:3px;height:1px;background:#8c8c8c"></div>
<div style="position:absolute;left:1265px;top:47px;width:10px;height:1px;background:#3a3a3a"></div>
<svg style="position:absolute;left:1266px;top:86px" width="7" height="9"><path d="M5 1 L2 4.5 L5 8" stroke="#bbbbbb" stroke-width="1" fill="none"/></svg>
<div style="position:absolute;left:1265px;top:82px;width:10px;height:18px;background:#1c1c1c;opacity:.6"></div>
<div style="position:absolute;left:1265px;top:283px;width:10px;height:1px;background:#3d3d3d"></div>
<div style="position:absolute;left:1265px;top:299px;width:6px;height:30px;background:#1a1a1a"></div>
<svg style="position:absolute;left:15px;top:824px" width="18" height="18" viewBox="0 0 18 18"><path d="M0.5 2.6 L7.3 1.7 V8.2 H0.5 Z M8.3 1.55 L17.5 0.3 V8.2 H8.3 Z M0.5 9.2 H7.3 V15.8 L0.5 14.9 Z M8.3 9.2 H17.5 V17.3 L8.3 16 Z" fill="#ffffff"/></svg>
<svg style="position:absolute;left:63px;top:823px" width="19" height="19" viewBox="0 0 19 19"><circle cx="11.5" cy="7.5" r="5.5" fill="none" stroke="#ffffff" stroke-width="1.3"/><path d="M7.5 11.5 L1.5 17.5" stroke="#ffffff" stroke-width="1.4"/></svg>
<svg style="position:absolute;left:110px;top:823px" width="20" height="19" viewBox="0 0 20 19"><path d="M3 1 V2 M3 4.5 V12 M15 1 V2 M15 4.5 V12 M3 12 H15" stroke="#ffffff" stroke-width="1.2" fill="none"/><path d="M1 15.5 H17 M2.5 15.5 V18 M15.5 15.5 V18" stroke="#ffffff" stroke-width="1.2" fill="none"/><rect x="18" y="6" width="1.6" height="1.6" fill="#fff"/></svg>
<svg style="position:absolute;left:160px;top:823px" width="23" height="19" viewBox="0 0 23 19"><path d="M0.5 2 H8 L10 4 H22 V18.5 H0.5 Z" fill="#e8b94a"/><path d="M0.5 5.5 H22.5 V18.5 H0.5 Z" fill="#f8d775"/><rect x="6.5" y="11" width="10" height="7.5" fill="#2d7fc8"/><rect x="8.5" y="13" width="6" height="4" fill="#f8d775"/></svg>
<svg style="position:absolute;left:209px;top:823px" width="25" height="18" viewBox="0 0 25 18"><rect x="0.5" y="0.5" width="24" height="17" fill="#3e8fd6"/><rect x="2.5" y="2.5" width="20" height="13" fill="#a8d8f0"/><path d="M2.5 11 Q8 6 13 9 Q18 12 22.5 8 V15.5 H2.5 Z" fill="#3a7a6a"/><path d="M2.5 13 Q10 10 22.5 12 V15.5 H2.5 Z" fill="#6aa8a0"/></svg>
<svg style="position:absolute;left:260px;top:821px" width="23" height="21" viewBox="0 0 23 21"><rect x="0" y="0" width="23" height="21" fill="#31a8ff"/><rect x="1.5" y="1.5" width="20" height="18" fill="#001e36"/><text x="4" y="14.5" font-family="Liberation Sans" font-size="11" font-weight="bold" fill="#31a8ff">Ps</text></svg>
<div style="position:absolute;left:151px;top:850px;width:41px;height:2px;background:#76b9ed"></div>
<div style="position:absolute;left:201px;top:850px;width:41px;height:2px;background:#76b9ed"></div>
<div style="position:absolute;left:251px;top:850px;width:41px;height:2px;background:#76b9ed"></div>
<svg style="position:absolute;left:893px;top:828px" width="14" height="8"><path d="M1 7 L7 1 L13 7" stroke="#dddddd" stroke-width="1.2" fill="none"/></svg>
<svg style="position:absolute;left:923px;top:828px" width="20" height="12" viewBox="0 0 20 12"><rect x="1" y="2" width="1.3" height="4" fill="#ddd"/><rect x="16.5" y="2" width="1" height="2" fill="#aaa"/><path d="M11 2 L17 11.5 H5 Z" fill="#f7c631"/><path d="M11 5 V8.5 M11 9.5 V10.5" stroke="#222" stroke-width="1.2"/></svg>
<svg style="position:absolute;left:957px;top:826px" width="16" height="14" viewBox="0 0 16 14"><path d="M2 12 Q4 4 13 2 M4.5 12.5 Q6 7 13 5 M7 13 Q8 10 13 8.5" stroke="#dddddd" stroke-width="1.1" fill="none"/><rect x="12" y="11" width="2" height="2" fill="#ddd"/></svg>
<svg style="position:absolute;left:988px;top:826px" width="16" height="14" viewBox="0 0 16 14"><path d="M1 4.5 H4 L7.5 1 V13 L4 9.5 H1" stroke="#dddddd" stroke-width="1.1" fill="none"/><path d="M10 5 L14 9 M14 5 L10 9" stroke="#dddddd" stroke-width="1.1"/></svg>
<svg style="position:absolute;left:1020px;top:825px" width="24" height="13" viewBox="0 0 24 13"><rect x="0.5" y="0.5" width="22" height="11" fill="none" stroke="#e8e8e8" stroke-width="1.1"/><path d="M3 4 H20 M3 6.5 H20" stroke="#cfcfcf" stroke-width="1" stroke-dasharray="1 1"/><path d="M4 9 H19" stroke="#e8e8e8" stroke-width="1.2"/></svg>
<svg style="position:absolute;left:1063px;top:826px" width="16" height="13" viewBox="0 0 16 13"><rect x="1" y="1" width="13" height="10" fill="none" stroke="#e8e8e8" stroke-width="1.2"/><path d="M1 8 H14" stroke="#e8e8e8" stroke-width="1.2"/></svg>
<div class="t" style="left:1096px;top:825px;font-size:14px;line-height:14px;color:#ffffff;font-weight:bold">中</div>
<div style="position:absolute;left:1125px;top:825px;width:15px;height:15px;background:#ffffff"></div>
<div class="t" style="left:1126px;top:827px;font-size:12px;line-height:12px;color:#111111;font-weight:bold;-webkit-text-stroke-width:0">拼</div>
<div class="t" style="left:1172px;top:817px;font-size:12.5px;line-height:12.5px;color:#ffffff;-webkit-text-stroke-width:0">16:50</div>
<div class="t" style="left:1161px;top:835px;font-size:13.5px;line-height:13.5px;color:#ffffff;-webkit-text-stroke-width:0">2021/3/3</div>
<svg style="position:absolute;left:1243px;top:827px" width="14" height="14"><path d="M2 8 L4 10 L6 8" stroke="#ddd" stroke-width="1" fill="none"/><path d="M12 1 V12" stroke="#ddd" stroke-width="1.2"/></svg>
</body></html>
